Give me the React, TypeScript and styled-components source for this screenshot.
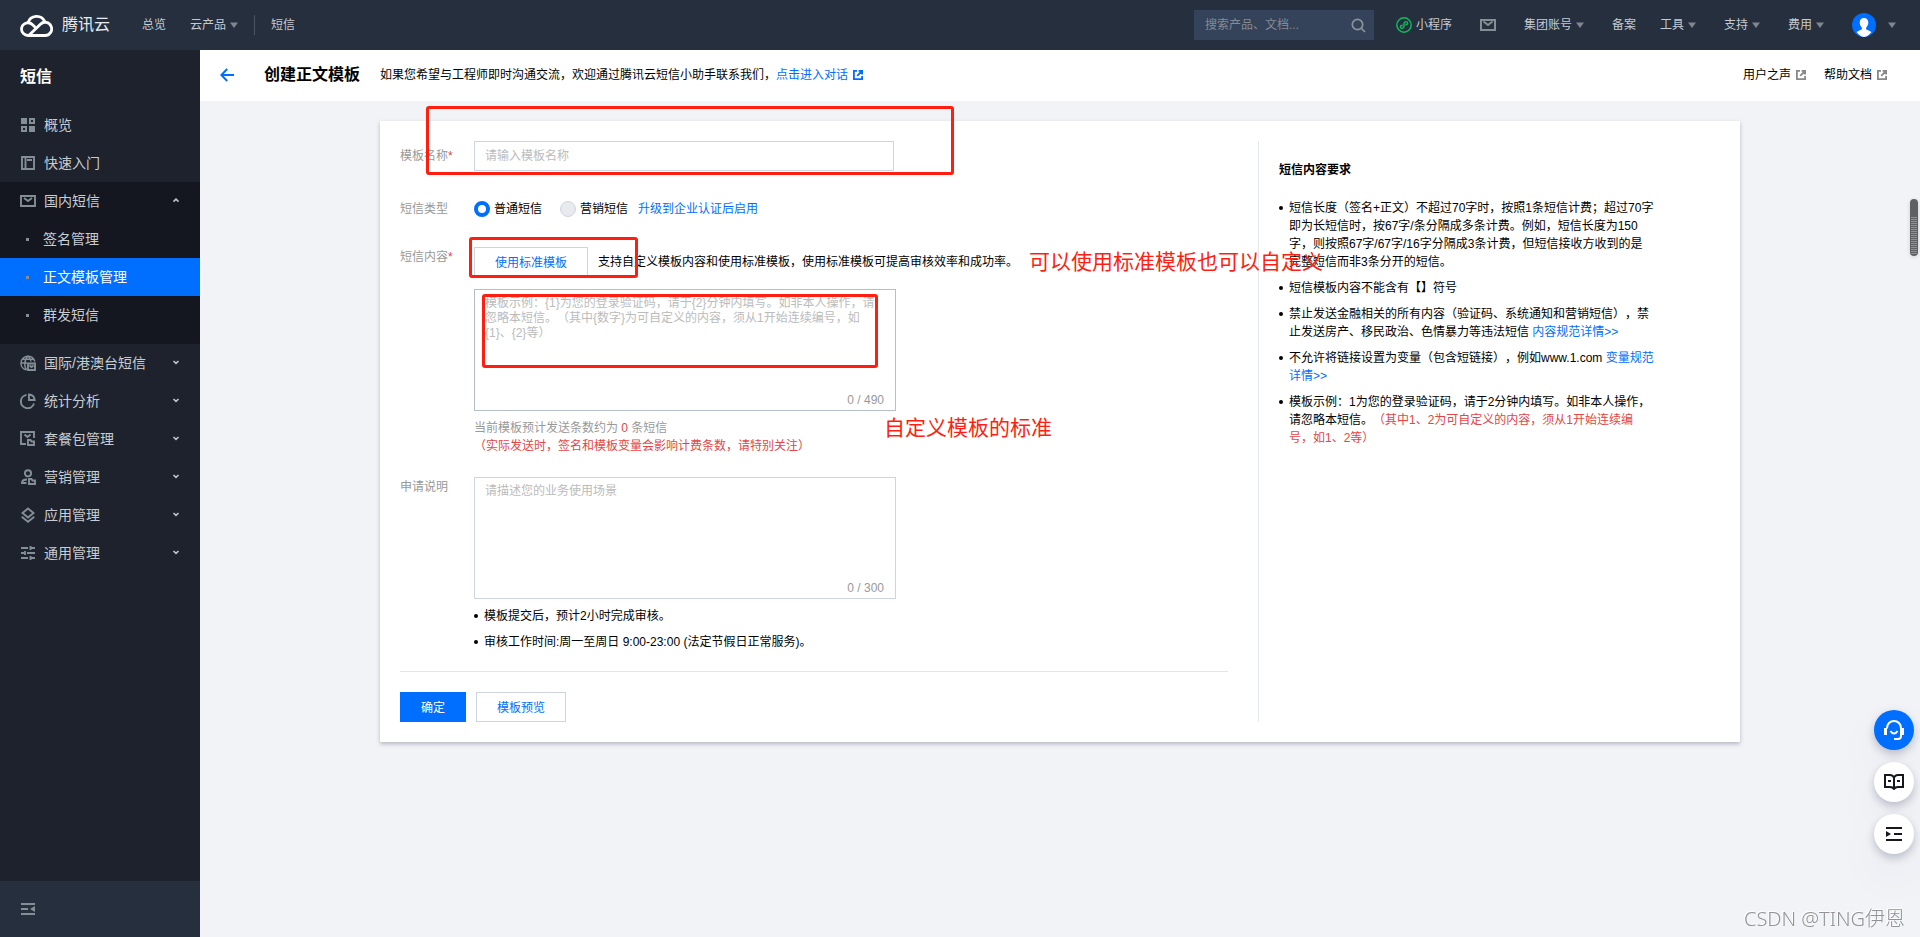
import React from "react";
import styled, { createGlobalStyle, css } from "styled-components";

const color = {
  bar: "#262f3e",
  side: "#1e222d",
  sideOpen: "#141620",
  blue: "#006eff",
  red: "#e54545",
  mark: "#ff1e10",
  border: "#cfd5de",
  icon: "#848e95",
};

const GlobalStyle = createGlobalStyle`
  *, *::before, *::after { box-sizing: border-box; }
  body {
    margin: 0;
    background: #f2f3f7;
    color: #000;
    font: 12px/18px "Liberation Sans", "Noto Sans CJK SC", sans-serif;
    text-spacing-trim: space-all;
  }
  button, input, textarea { font: inherit; color: inherit; }
  h1, h2, p, ul { margin: 0; padding: 0; }
  ul { list-style: none; }
  a { color: ${color.blue}; text-decoration: none; }
  button { cursor: pointer; }
  svg { display: block; flex: none; }
`;

const Page = styled.div`
  display: flex;
  flex-direction: column;
  min-height: 100vh;
`;

/* ---------- top bar ---------- */

const TopBar = styled.header`
  display: flex;
  align-items: center;
  justify-content: space-between;
  height: 50px;
  padding: 0 24px 0 20px;
  background: ${color.bar};
  color: #c5cad0;
`;

const TopGroup = styled.nav<{ $gap: number }>`
  display: flex;
  align-items: center;
  gap: ${(p) => p.$gap}px;
  white-space: nowrap;
`;

const Brand = styled.a`
  display: flex;
  align-items: center;
  gap: 9px;
  margin-right: 8px;
  color: #e8eaed;
  font-size: 16px;
  line-height: 24px;
`;

const TopLink = styled.a`
  display: flex;
  align-items: center;
  gap: 4px;
  color: inherit;
`;

const TopMenu = styled.button`
  display: flex;
  align-items: center;
  gap: 4px;
  padding: 0;
  border: 0;
  background: none;
`;

const TopPair = styled.div`
  display: flex;
  gap: 24px;
`;

const Separator = styled.span`
  width: 1px;
  height: 20px;
  margin: 0 -8px;
  background: #4a5361;
`;

const Search = styled.form`
  display: flex;
  align-items: center;
  width: 180px;
  height: 30px;
  margin-right: -6px;
  padding: 0 8px 0 11px;
  background: #34425a;

  input {
    flex: 1;
    min-width: 0;
    padding: 0;
    border: 0;
    outline: 0;
    background: none;
  }
  input::placeholder { color: #848b95; opacity: 1; }
  button { padding: 0; border: 0; background: none; }
`;

const Account = styled(TopMenu)`
  gap: 12px;
`;

/* ---------- side bar ---------- */

const Body = styled.div`
  display: flex;
  flex: 1;
`;

const SideBar = styled.aside`
  display: flex;
  flex: none;
  flex-direction: column;
  width: 200px;
  background: ${color.side};
  color: #c9cdd2;
  font-size: 14px;
`;

const SideTitle = styled.h2`
  padding: 15px 20px 17px;
  color: #fff;
  font-size: 16px;
  line-height: 24px;
`;

const SideNav = styled.nav`
  flex: 1;
`;

const SideGroup = styled.ul`
  && { padding-bottom: 10px; }
  background: ${color.sideOpen};
`;

const sideRow = css`
  display: flex;
  align-items: center;
  width: 100%;
  height: 38px;
  padding: 0 20px;
  border: 0;
  background: none;
  color: inherit;
  text-align: left;
`;

const SideLink = styled.a`
  ${sideRow}
  gap: 8px;
`;

const SideToggle = styled.button<{ $open?: boolean }>`
  ${sideRow}
  gap: 8px;
  background: ${(p) => (p.$open ? color.sideOpen : "none")};

  span { flex: 1; }
`;

const SubLink = styled.a<{ $active?: boolean }>`
  ${sideRow}
  padding-left: 26px;
  background: ${(p) => (p.$active ? color.blue : "none")};
  color: ${(p) => (p.$active ? "#fff" : "inherit")};

  &::before {
    content: "";
    width: 3px;
    height: 3px;
    margin-right: 14px;
    background: ${color.icon};
  }
`;

const Collapse = styled.button`
  ${sideRow}
  height: 56px;
  background: ${color.bar};
`;

/* ---------- main area ---------- */

const Main = styled.main`
  flex: 1;
  min-width: 0;
`;

const PageHead = styled.div`
  display: flex;
  align-items: center;
  height: 51px;
  padding: 0 33px 1px 20px;
  background: #fff;
`;

const Back = styled.button`
  padding: 0;
  border: 0;
  background: none;
`;

const PageTitle = styled.h1`
  margin: 0 20px 0 30px;
  font-size: 16px;
  line-height: 24px;
`;

const IconLink = styled.a<{ $plain?: boolean }>`
  display: inline-flex;
  align-items: center;
  gap: 5px;
  color: ${(p) => (p.$plain ? "#000" : color.blue)};
`;

const HeadNote = styled.p`
  flex: 1;
  display: flex;
`;

const HeadLinks = styled.nav`
  display: flex;
  gap: 18px;
`;

const Content = styled.div`
  padding: 20px;
`;

const Card = styled.section`
  position: relative;
  display: grid;
  grid-template-columns: minmax(0, 1fr) 462px;
  gap: 30px;
  max-width: 1360px;
  margin: 0 auto;
  padding: 20px;
  background: #fff;
  box-shadow: 0 2px 4px rgba(54, 58, 80, 0.32);
`;

const Form = styled.form`
  display: flex;
  flex-direction: column;
  gap: 23px;
`;

const Row = styled.div<{ $tall?: boolean }>`
  display: grid;
  grid-template-columns: 74px minmax(0, 1fr);
  align-items: ${(p) => (p.$tall ? "start" : "center")};
  min-height: 30px;
`;

const Label = styled.label`
  color: #999;
  line-height: 20px;

  em { color: ${color.red}; font-style: normal; }
`;

const TextInput = styled.input`
  width: 420px;
  height: 30px;
  padding: 0 10px;
  border: 1px solid ${color.border};
  outline: 0;
  &::placeholder { color: #bbb; opacity: 1; }
`;

const Choices = styled.div`
  display: flex;
  align-items: center;
`;

const Choice = styled.label`
  display: flex;
  align-items: center;
  gap: 4px;
  margin-right: 18px;

  & + a { margin-left: -8px; }
`;

const Radio = styled.input.attrs({ type: "radio" })`
  appearance: none;
  width: 16px;
  height: 16px;
  margin: 0;
  border: 1px solid ${color.border};
  border-radius: 50%;
  background: #fff;

  &:checked { border: 4px solid ${color.blue}; }
  &:disabled { background: #e7eaef; }
`;

const Inline = styled.div`
  display: flex;
  align-items: center;
  gap: 10px;
  margin-bottom: 12px;
`;

const Button = styled.button<{ $primary?: boolean }>`
  height: 30px;
  padding: 1px 20px 0;
  border: 1px solid ${(p) => (p.$primary ? color.blue : color.border)};
  background: ${(p) => (p.$primary ? color.blue : "#fff")};
  color: ${(p) => (p.$primary ? "#fff" : color.blue)};
`;

const AreaBox = styled.div`
  position: relative;
  width: 422px;
`;

const Area = styled.textarea<{ $strong?: boolean }>`
  display: block;
  width: 100%;
  height: 122px;
  padding: 6px 10px;
  border: 1px solid ${(p) => (p.$strong ? "#b5becb" : color.border)};
  outline: 0;
  line-height: 15px;
  resize: none;
  &::placeholder { color: #bbb; opacity: 1; }
`;

const Counter = styled.output`
  position: absolute;
  right: 12px;
  bottom: 2px;
  color: #999;
`;

const Hint = styled.p`
  padding-top: 8px;
  margin-bottom: -1px;
  color: #999;

  em { color: ${color.red}; font-style: normal; }
`;

const Bullets = styled.ul`
  display: grid;
  gap: 8px;
  max-width: 378px;
  && { margin-top: 8px; }

  li { position: relative; padding-left: 10px; }
  li::before {
    content: "";
    position: absolute;
    left: 0;
    top: 7px;
    width: 4px;
    height: 4px;
    border-radius: 50%;
    background: #000;
  }
  em { color: ${color.red}; font-style: normal; }
`;

const Actions = styled.div`
  display: flex;
  gap: 10px;
  margin-top: -3px;
  padding-top: 20px;
  border-top: 1px solid #e5e5e5;
`;

const Rules = styled.aside`
  padding: 20px 0 0 20px;
  border-left: 1px solid #e5e8ed;

  h2 {
    margin-bottom: 20px;
    font-size: 12px;
    line-height: 18px;
  }
  && > ul { margin-top: 0; }
`;

/* ---------- red mark-up over the card ---------- */

const MarkBox = styled.span<{ $x: number; $y: number; $w: number; $h: number }>`
  position: absolute;
  left: ${(p) => p.$x}px;
  top: ${(p) => p.$y}px;
  width: ${(p) => p.$w}px;
  height: ${(p) => p.$h}px;
  border: 3px solid ${color.mark};
  border-radius: 3px;
  pointer-events: none;
`;

const MarkText = styled.span<{ $x: number; $y: number }>`
  position: absolute;
  left: ${(p) => p.$x}px;
  top: ${(p) => p.$y}px;
  color: ${color.mark};
  font-size: 21px;
  line-height: 30px;
  white-space: nowrap;
  pointer-events: none;
`;

/* ---------- floating items ---------- */

const Floating = styled.div`
  position: fixed;
  right: 6px;
  bottom: 83px;
  display: grid;
  gap: 12px;
`;

const RoundButton = styled.button<{ $blue?: boolean }>`
  display: grid;
  place-items: center;
  width: 40px;
  height: 40px;
  padding: 0;
  border: 0;
  border-radius: 50%;
  background: ${(p) => (p.$blue ? color.blue : "#fff")};
  box-shadow: 0 4px 10px rgba(55, 70, 100, 0.3), 0 20px 50px rgba(55, 70, 100, 0.06);
`;

const Meter = styled.div`
  position: fixed;
  right: 2px;
  top: 199px;
  display: flex;
  align-items: flex-end;
  width: 8px;
  height: 57px;
  padding: 1px;
  border-radius: 4px;
  background: #5f6062;
  box-shadow: 0 1px 4px rgba(0, 0, 0, 0.15);

  &::before {
    content: "";
    width: 6px;
    height: 38px;
    border-radius: 0 0 3px 3px;
    background: repeating-linear-gradient(#3ec46d 0 1px, #5f6062 1px 2px);
  }
`;

const Watermark = styled.div`
  position: fixed;
  right: 15px;
  bottom: 4px;
  color: #929294;
  font: 300 20px/28px "Noto Sans", "Noto Sans CJK SC", sans-serif;
  text-shadow: -1px -1px 0 #fff;
`;

/* ---------- icons ---------- */

const Caret = () => (
  <svg width="8" height="6" viewBox="0 0 8 6" fill="#80868f"><path d="M0 .5h8L4 6z" /></svg>
);

const Chevron = ({ up }: { up?: boolean }) => (
  <svg width="8" height="8" viewBox="0 0 8 8" fill="none" stroke="#c0c5cb" strokeWidth="1.6">
    <path d={up ? "M1.5 4.6 4 2.2l2.5 2.4" : "M1.5 2 4 4.4 6.5 2"} />
  </svg>
);

const Logo = () => (
  <svg width="33" height="24" viewBox="0 0 33 24" fill="none" stroke="#fff" strokeWidth="2.8">
    <path d="M24.8 8.6A9 9 0 0 0 8 9.7" />
    <path d="M15.2 14.2 12.6 11.7A6.5 6.5 0 0 0 1.5 16c0 3.6 2.9 6.5 6.5 6.5h17a6.6 6.6 0 1 0-4.6-11.3L9 22.3" />
  </svg>
);

const SearchIcon = () => (
  <svg width="15" height="15" viewBox="0 0 15 15" fill="none" stroke="#8b929b" strokeWidth="1.7">
    <circle cx="6.5" cy="6.5" r="5.2" /><path d="m10.5 10.5 3.5 3.5" />
  </svg>
);

const MiniApp = () => (
  <svg width="16" height="16" viewBox="0 0 16 16" fill="none" stroke="#0abf5b" strokeWidth="1.4">
    <circle cx="8" cy="8" r="7.2" />
    <path d="M6.6 8.2c-3.2.4-2.6 3.4-.4 3.2 1.2-.1 1.8-.9 1.8-2.1V6.7c0-1.2.6-2 1.8-2.1 2.2-.2 2.8 2.8-.4 3.2" />
  </svg>
);

const Mail = () => (
  <svg width="16" height="12" viewBox="0 0 16 12" fill="none" stroke={color.icon} strokeWidth="2">
    <path d="M1 1h14v10H1z" /><path d="m3.500 2.500 4.500 3.500 4.500-3.500" />
  </svg>
);

const Avatar = () => (
  <svg width="24" height="24" viewBox="0 0 24 24">
    <circle cx="12" cy="12" r="12" fill={color.blue} />
    <path fill="#fff" d="M12 5c-2.700 0-4.300 1.900-4.300 4.600 0 1.900.9 4 2.200 5.100v1.600l-5.400 2.600A12 12 0 0 0 12 24a12 12 0 0 0 7.500-5.100l-5.400-2.600v-1.600c1.300-1.100 2.200-3.200 2.200-5.100C16.300 6.900 14.700 5 12 5z" />
  </svg>
);

const Arrow = () => (
  <svg width="14" height="14" viewBox="0 0 14 14" fill="none" stroke={color.blue} strokeWidth="2">
    <path d="M14 7H1.500M7.200 1 1.300 7l5.900 6" />
  </svg>
);

const External = ({ fill }: { fill: string }) => (
  <svg width="10" height="10" viewBox="0 0 10 10" fill="none" stroke={fill} strokeWidth="1.8">
    <path d="M4 .9H.9v8.200h8.200V6M5.600.9h3.500v3.500M9 1 4.200 5.800" />
  </svg>
);

const sideIcons: Record<string, React.ReactNode> = {
  overview: (
    <g fill={color.icon} fillRule="evenodd">
      <path d="M1 1h6v6H1zM9 9h6v6H9zM9 1h6v6H9zm2 2v2h2V3zM1 9h6v6H1zm2 2v2h2v-2z" />
    </g>
  ),
  start: <path d="M2 2h12v12H2zM5.500 2v12M7 5h5" />,
  mail: <path d="M1 3h14v10H1zM4 5l4 3 4-3" />,
  global: (
    <>
      <path d="M6.500 15A7 7 0 1 1 14.800 6.500M1 8h6M2.500 4.200h11M6.500 15C3.800 11 4.200 4.500 8 1c1.800 1.700 2.800 3.600 3 5.500" strokeWidth="1.5" />
      <path d="M8 8.500h7V15H8zM9.500 10.500l2 1.500 2-1.500" />
    </>
  ),
  pie: <path d="M6.500 1.900A6.700 6.700 0 1 0 14 10.500M9 1.500V7h5.700A6.200 6.200 0 0 0 9 1.500z" />,
  pack: <path d="M6 13H1V1h13v6M4.500 3.500l3 2.500 3-2.500M8 9h2.500l1 1.500H14V14H8z" />,
  market: (
    <path d="M8 1.200a3.100 3.100 0 1 1 0 6.200 3.100 3.100 0 0 1 0-6.200zM7 10.500c-3 0-5 1.200-5 3.500h4.500M9 10h2.500l1 1.500H15V15H9z" />
  ),
  layers: <path d="m8 1.500 5.500 4.500L8 10.500 2.500 6zM1.700 9.700 8 14.700l6.300-5" />,
  sliders: <path d="M1 3h7M11 3h4M10.500 1v4M1 8h3M5 6v4M7 8h8M1 13h7M11 13h4M10.500 11v4" />,
};

const SideIcon = ({ name }: { name: string }) => (
  <svg width="16" height="16" viewBox="0 0 16 16" fill="none" stroke={color.icon}
    strokeWidth={name === "overview" ? 0 : 1.9}>
    {sideIcons[name]}
  </svg>
);

const CollapseIcon = () => (
  <svg width="16" height="14" viewBox="0 0 16 14" fill={color.icon}>
    <path d="M1 1h14v2H1zM1 6h7v2H1zM1 11h14v2H1zM15 4v6l-5-3z" />
  </svg>
);

const Headset = () => (
  <svg width="22" height="22" viewBox="0 0 22 22" fill="none" stroke="#fff" strokeWidth="2">
    <path d="M4 9.500C4 5 7 2 11 2s7 3 7 7.500V17c0 2-1 3-3 3h-4" />
    <path d="M2.500 9v7M19.500 9v7" strokeWidth="3" />
    <path d="M7.500 12c1.800 3.200 5.200 3.200 7 0" />
  </svg>
);

const Book = () => (
  <svg width="20" height="16" viewBox="0 0 20 16" fill="none" stroke="#16181d" strokeWidth="2">
    <path d="M10 3.500C9 1.700 8 1 6 1H1v12h5c2 0 3 .3 4 2 1-1.700 2-2 4-2h5V1h-5c-2 0-3 .7-4 2.500zV15M4 7h3M13 7h3" />
  </svg>
);

const ListIcon = () => (
  <svg width="16" height="14" viewBox="0 0 16 14" fill="#16181d">
    <path d="M0 0h16v2H0zM8 6h8v2H8zM0 12h16v2H0zM0 4l5 3-5 3z" />
  </svg>
);

/* ---------- data ---------- */

const subItems = ["签名管理", "正文模板管理", "群发短信"];

const closedGroups = [
  { icon: "global", text: "国际/港澳台短信" },
  { icon: "pie", text: "统计分析" },
  { icon: "pack", text: "套餐包管理" },
  { icon: "market", text: "营销管理" },
  { icon: "layers", text: "应用管理" },
  { icon: "sliders", text: "通用管理" },
];

export default function App() {
  return (
    <Page>
      <GlobalStyle />
      <TopBar>
        <TopGroup $gap={24}>
          <Brand href="#"><Logo />腾讯云</Brand>
          <TopLink href="#">总览</TopLink>
          <TopMenu>云产品<Caret /></TopMenu>
          <Separator />
          <TopLink href="#">短信</TopLink>
        </TopGroup>
        <TopGroup $gap={28}>
          <Search>
            <input aria-label="搜索" placeholder="搜索产品、文档..." />
            <button type="button" aria-label="搜索"><SearchIcon /></button>
          </Search>
          <TopLink href="#"><MiniApp />小程序</TopLink>
          <TopLink href="#" aria-label="站内信"><Mail /></TopLink>
          <TopMenu>集团账号<Caret /></TopMenu>
          <TopPair>
            <TopLink href="#">备案</TopLink>
            <TopMenu>工具<Caret /></TopMenu>
          </TopPair>
          <TopMenu>支持<Caret /></TopMenu>
          <TopMenu>费用<Caret /></TopMenu>
          <Account aria-label="账号"><Avatar /><Caret /></Account>
        </TopGroup>
      </TopBar>

      <Body>
        <SideBar>
          <SideTitle>短信</SideTitle>
          <SideNav>
            <SideLink href="#"><SideIcon name="overview" />概览</SideLink>
            <SideLink href="#"><SideIcon name="start" />快速入门</SideLink>
            <SideToggle $open aria-expanded="true">
              <SideIcon name="mail" /><span>国内短信</span><Chevron up />
            </SideToggle>
            <SideGroup>
              {subItems.map((text, i) => (
                <li key={text}><SubLink href="#" $active={i === 1}>{text}</SubLink></li>
              ))}
            </SideGroup>
            {closedGroups.map((g) => (
              <SideToggle key={g.text} aria-expanded="false">
                <SideIcon name={g.icon} /><span>{g.text}</span><Chevron />
              </SideToggle>
            ))}
          </SideNav>
          <Collapse aria-label="收起菜单"><CollapseIcon /></Collapse>
        </SideBar>

        <Main>
          <PageHead>
            <Back aria-label="返回"><Arrow /></Back>
            <PageTitle>创建正文模板</PageTitle>
            <HeadNote>
              如果您希望与工程师即时沟通交流，欢迎通过腾讯云短信小助手联系我们，
              <IconLink href="#">点击进入对话<External fill={color.blue} /></IconLink>
            </HeadNote>
            <HeadLinks>
              <IconLink href="#" $plain>用户之声<External fill="#888" /></IconLink>
              <IconLink href="#" $plain>帮助文档<External fill="#888" /></IconLink>
            </HeadLinks>
          </PageHead>

          <Content>
            <Card>
              <Form>
                <Row>
                  <Label htmlFor="name">模板名称<em>*</em></Label>
                  <TextInput id="name" placeholder="请输入模板名称" />
                </Row>
                <Row>
                  <Label as="span">短信类型</Label>
                  <Choices role="radiogroup" aria-label="短信类型">
                    <Choice><Radio name="kind" defaultChecked />普通短信</Choice>
                    <Choice><Radio name="kind" disabled />营销短信</Choice>
                    <a href="#">升级到企业认证后启用</a>
                  </Choices>
                </Row>
                <Row $tall>
                  <Label htmlFor="content">短信内容<em>*</em></Label>
                  <div>
                    <Inline>
                      <Button type="button">使用标准模板</Button>
                      <span>支持自定义模板内容和使用标准模板，使用标准模板可提高审核效率和成功率。</span>
                    </Inline>
                    <AreaBox>
                      <Area
                        id="content"
                        $strong
                        placeholder="模板示例：{1}为您的登录验证码，请于{2}分钟内填写。如非本人操作，请忽略本短信。（其中{数字}为可自定义的内容，须从1开始连续编号，如{1}、{2}等）"
                      />
                      <Counter>0 / 490</Counter>
                    </AreaBox>
                    <Hint>
                      当前模板预计发送条数约为 <em>0</em> 条短信<br />
                      <em>（实际发送时，签名和模板变量会影响计费条数，请特别关注）</em>
                    </Hint>
                  </div>
                </Row>
                <Row $tall>
                  <Label htmlFor="reason">申请说明</Label>
                  <div>
                    <AreaBox>
                      <Area id="reason" placeholder="请描述您的业务使用场景" />
                      <Counter>0 / 300</Counter>
                    </AreaBox>
                    <Bullets>
                      <li>模板提交后，预计2小时完成审核。</li>
                      <li>审核工作时间:周一至周日 9:00-23:00 (法定节假日正常服务)。</li>
                    </Bullets>
                  </div>
                </Row>
                <Actions>
                  <Button type="button" $primary>确定</Button>
                  <Button type="button">模板预览</Button>
                </Actions>
              </Form>

              <Rules>
                <h2>短信内容要求</h2>
                <Bullets>
                  <li>
                    短信长度（签名+正文）不超过70字时，按照1条短信计费；超过70字即为长短信时，按67字/条分隔成多条计费。例如，短信长度为150字，则按照67字/67字/16字分隔成3条计费，但短信接收方收到的是
                    <br />
                    完整短信而非3条分开的短信。
                  </li>
                  <li>短信模板内容不能含有【】符号</li>
                  <li>禁止发送金融相关的所有内容（验证码、系统通知和营销短信），禁止发送房产、移民政治、色情暴力等违法短信 <a href="#">内容规范详情&gt;&gt;</a></li>
                  <li>不允许将链接设置为变量（包含短链接），例如www.1.com <a href="#">变量规范详情&gt;&gt;</a></li>
                  <li>模板示例：1为您的登录验证码，请于2分钟内填写。如非本人操作，请忽略本短信。<em>（其中1、2为可自定义的内容，须从1开始连续编号，如1、2等）</em></li>
                </Bullets>
              </Rules>

              <MarkBox $x={46} $y={-15} $w={528} $h={69} />
              <MarkBox $x={89} $y={116} $w={169} $h={41} />
              <MarkBox $x={102} $y={173} $w={396} $h={74} />
              <MarkText $x={649} $y={126}>可以使用标准模板也可以自定义</MarkText>
              <MarkText $x={504} $y={292}>自定义模板的标准</MarkText>
            </Card>
          </Content>
        </Main>
      </Body>

      <Meter />
      <Floating>
        <RoundButton $blue aria-label="在线客服"><Headset /></RoundButton>
        <RoundButton aria-label="文档"><Book /></RoundButton>
        <RoundButton aria-label="展开"><ListIcon /></RoundButton>
      </Floating>
      <Watermark>CSDN @TING伊恩</Watermark>
    </Page>
  );
}
